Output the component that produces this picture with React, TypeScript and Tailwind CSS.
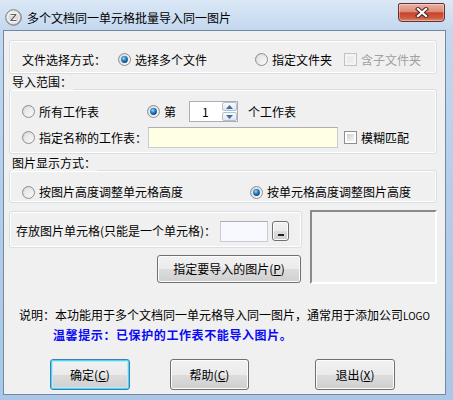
import React from "react";

function Radio({ checked }: { checked?: boolean }) {
  return (
    <svg width="13" height="13" viewBox="0 0 13 13" className="shrink-0">
      <defs>
        <linearGradient id="rOuter" x1="0" y1="0" x2="1" y2="1">
          <stop offset="0" stopColor="#d0d0d0" />
          <stop offset="1" stopColor="#fdfdfd" />
        </linearGradient>
        <linearGradient id="rInner" x1="0" y1="0" x2="1" y2="1">
          <stop offset="0" stopColor="#e2e2e2" />
          <stop offset="1" stopColor="#f8f8f8" />
        </linearGradient>
        <radialGradient id="rDot" cx="40%" cy="35%" r="65%">
          <stop offset="0" stopColor="#9fe0ff" />
          <stop offset="0.45" stopColor="#2f8ad2" />
          <stop offset="1" stopColor="#0b3f78" />
        </radialGradient>
      </defs>
      <circle cx="6.5" cy="6.5" r="6" fill="url(#rOuter)" stroke="#8b8f94" strokeWidth="1" />
      <circle cx="6.5" cy="6.5" r="4.3" fill="url(#rInner)" />
      {checked && <circle cx="6.5" cy="6.5" r="3.4" fill="url(#rDot)" />}
    </svg>
  );
}

function Check({ disabled }: { disabled?: boolean }) {
  return (
    <div
      className={`w-[13px] h-[13px] shrink-0 border p-[2px] ${
        disabled ? "border-[#c2c2c2] bg-[#f4f4f4]" : "border-[#8e8f8f] bg-white"
      }`}
    >
      <div
        className={`w-full h-full ${
          disabled
            ? "bg-[#ececec]"
            : "bg-[linear-gradient(135deg,#cfcfcf,#f6f6f6)]"
        }`}
      />
    </div>
  );
}

function WinButton({
  children,
  className,
  focused,
}: {
  children: React.ReactNode;
  className?: string;
  focused?: boolean;
}) {
  return (
    <div
      className={`flex items-center justify-center rounded-[3px] border bg-[linear-gradient(to_bottom,#f2f2f2_0%,#ebebeb_50%,#dddddd_51%,#cfcfcf_100%)] whitespace-nowrap ${
        focused
          ? "border-[#3c7fb1] shadow-[inset_0_0_0_1px_#4fd2f8,inset_0_0_0_2px_#b9ecfb]"
          : "border-[#707070] shadow-[inset_0_0_0_1px_#fcfcfc]"
      } ${className ?? ""}`}
    >
      {children}
    </div>
  );
}

function AppIcon() {
  return (
    <svg width="17" height="17" viewBox="0 0 17 17" className="shrink-0">
      <defs>
        <linearGradient id="ai" x1="0" y1="0" x2="1" y2="1">
          <stop offset="0" stopColor="#f2f2f2" />
          <stop offset="1" stopColor="#a8a8a8" />
        </linearGradient>
      </defs>
      <circle cx="8.5" cy="8.5" r="7.8" fill="url(#ai)" stroke="#7c7c7c" strokeWidth="1" />
      <circle cx="8.5" cy="8.5" r="5.8" fill="#d9d9d9" stroke="#ffffff" strokeWidth="1" />
      <path d="M5.5 5.5 H11 L5.8 11.5 H11.5" fill="none" stroke="#ffffff" strokeWidth="2.6" strokeLinejoin="round" />
      <path d="M5.5 5.5 H11 L5.8 11.5 H11.5" fill="none" stroke="#5e5e5e" strokeWidth="1.2" strokeLinejoin="round" />
    </svg>
  );
}

function CloseButton() {
  return (
    <div className="w-[47px] h-[19px] rounded-b-[4px] rounded-t-[2px] border border-[#6b2f27] bg-[linear-gradient(to_bottom,#eab0a2_0%,#dd8b78_45%,#c9432b_52%,#cc5a40_80%,#d98a6e_100%)] shadow-[inset_0_0_0_1px_rgba(255,255,255,0.35)] flex items-center justify-center">
      <svg width="14" height="11" viewBox="0 0 14 11">
        <path d="M3 2 L11 9 M11 2 L3 9" stroke="#4a2a26" strokeWidth="4.2" strokeLinecap="square" />
        <path d="M3 2 L11 9 M11 2 L3 9" stroke="#ffffff" strokeWidth="2.2" strokeLinecap="square" />
      </svg>
    </div>
  );
}

function SpinHalf({ up }: { up?: boolean }) {
  return (
    <div className="flex-1 flex items-center justify-center border border-[#b4bfcc] rounded-[2px] bg-[linear-gradient(to_bottom,#fbfcfd,#dfe6ee)]">
      <svg width="7" height="4" viewBox="0 0 7 4">
        {up ? (
          <path d="M0 4 L3.5 0 L7 4 Z" fill="#3b6ea8" />
        ) : (
          <path d="M0 0 L3.5 4 L7 0 Z" fill="#3b6ea8" />
        )}
      </svg>
    </div>
  );
}

export default function App() {
  return (
    <div className="w-[453px] h-[400px] flex flex-col overflow-hidden bg-[linear-gradient(to_bottom,#dbe8f6_0px,#c3d8ef_30px,#b3cdea_200px,#aac7e7_400px)] font-['Noto_Sans_CJK_SC',sans-serif] text-[12px] leading-[16px] text-black">
      {/* Title bar */}
      <div className="h-[30px] flex items-start shrink-0">
        <div className="flex items-center pl-[5px] pt-[9px] gap-[5px]">
          <AppIcon />
          <span className="text-[12px] leading-[16px] text-black">多个文档同一单元格批量导入同一图片</span>
        </div>
        <div className="ml-auto mt-[3px] mr-[8px]">
          <CloseButton />
        </div>
      </div>

      {/* Client area */}
      <div className="ml-[3px] mr-[7px] mb-[5px] flex-1 border border-[#7389a2] bg-[#f0f0f0] flex flex-col pl-[5px] pr-[8px] pt-[9px]">
        {/* Group 1 */}
        <div className="h-[34px] rounded-[3px] border border-[#d5dfe5] shadow-[inset_0_0_0_1px_#ffffff] flex items-center pl-[12px] pt-[5px] whitespace-nowrap">
          <span className="w-[96px]">文件选择方式：</span>
          <div className="w-[137px] flex items-center gap-[4px]">
            <Radio checked />
            <span>选择多个文件</span>
          </div>
          <div className="w-[89px] flex items-center gap-[4px]">
            <Radio />
            <span>指定文件夹</span>
          </div>
          <div className="flex items-center gap-[4px]">
            <Check disabled />
            <span className="text-[#a0a0a0]">含子文件夹</span>
          </div>
        </div>

        {/* Group 2 */}
        <div className="relative mt-[15px] h-[65px] rounded-[3px] border border-[#d5dfe5] shadow-[inset_0_0_0_1px_#ffffff] pl-[12px] pt-[11px] flex flex-col gap-[5px] whitespace-nowrap">
          <span className="absolute left-[1px] top-[-16px] px-[1px] bg-[#f0f0f0]">导入范围：</span>
          <div className="h-[21px] flex items-center">
            <div className="w-[125px] flex items-center gap-[4px]">
              <Radio />
              <span>所有工作表</span>
            </div>
            <div className="w-[42px] flex items-center gap-[4px]">
              <Radio checked />
              <span>第</span>
            </div>
            <div className="w-[49px] h-[21px] border border-[#abadb3] bg-white flex items-stretch">
              <span className="flex-1 pl-[12px] flex items-center">1</span>
              <div className="w-[15px] flex flex-col gap-[1px]">
                <SpinHalf up />
                <SpinHalf />
              </div>
            </div>
            <span className="ml-[10px]">个工作表</span>
          </div>
          <div className="h-[21px] flex items-center">
            <div className="w-[126px] flex items-center gap-[4px]">
              <Radio />
              <span>指定名称的工作表：</span>
            </div>
            <div className="w-[190px] h-[21px] border border-[#c9cbd1] border-t-[#abadb3] bg-[#ffffe3]" />
            <div className="ml-[6px] flex items-center gap-[4px]">
              <Check />
              <span>模糊匹配</span>
            </div>
          </div>
        </div>

        {/* Group 3 */}
        <div className="relative mt-[16px] h-[33px] rounded-[3px] border border-[#d5dfe5] shadow-[inset_0_0_0_1px_#ffffff] pl-[12px] pt-[13px] flex items-start whitespace-nowrap">
          <span className="absolute left-[1px] top-[-16px] px-[1px] bg-[#f0f0f0]">图片显示方式：</span>
          <div className="w-[228px] flex items-center gap-[4px]">
            <Radio />
            <span>按图片高度调整单元格高度</span>
          </div>
          <div className="flex items-center gap-[4px]">
            <Radio checked />
            <span>按单元格高度调整图片高度</span>
          </div>
        </div>

        {/* Cell + preview row */}
        <div className="mt-[7px] flex items-start">
          <div className="w-[293px] flex flex-col">
            <div className="mt-[1px] h-[37px] rounded-[3px] border border-[#d5dfe5] shadow-[inset_0_0_0_1px_#ffffff] flex items-center pl-[6px] pt-[3px] whitespace-nowrap">
              <span className="w-[204px]">存放图片单元格(只能是一个单元格)：</span>
              <div className="w-[48px] h-[21px] border border-[#c9cbd1] border-t-[#abadb3] bg-[#f7f9ff]" />
              <WinButton className="ml-[4px] w-[17px] h-[20px] items-end pb-[4px]">
                <div className="w-[6px] h-[2px] bg-[#222]" />
              </WinButton>
            </div>
            <WinButton className="self-end mr-[1px] mt-[7px] w-[144px] h-[28px]">
              指定要导入的图片(<span className="underline">P</span>)
            </WinButton>
          </div>
          <div className="ml-auto w-[127px] h-[74px] border-2 border-t-[#8a8a8a] border-l-[#8a8a8a] border-b-[#ffffff] border-r-[#ffffff] bg-[#f0f0f0]" />
        </div>

        {/* Description */}
        <div className="mt-[23px] pl-[10px] tracking-[0px] whitespace-nowrap">
          说明：本功能用于多个文档同一单元格导入同一图片，通常用于添加公司<span className="text-[10px]">LOGO</span>
        </div>
        <div className="mt-[3px] pl-[44px] font-bold text-[#0a0af5] tracking-[0.6px] whitespace-nowrap">
          温馨提示：已保护的工作表不能导入图片。
        </div>

        {/* Bottom buttons */}
        <div className="mt-[16px] pl-[41px] flex items-center">
          <WinButton focused className="w-[80px] h-[31px]">
            确定(<span className="underline">C</span>)
          </WinButton>
          <WinButton className="ml-[40px] w-[79px] h-[31px]">
            帮助(<span className="underline">C</span>)
          </WinButton>
          <WinButton className="ml-[66px] w-[80px] h-[31px]">
            退出(<span className="underline">X</span>)
          </WinButton>
        </div>
      </div>
    </div>
  );
}
